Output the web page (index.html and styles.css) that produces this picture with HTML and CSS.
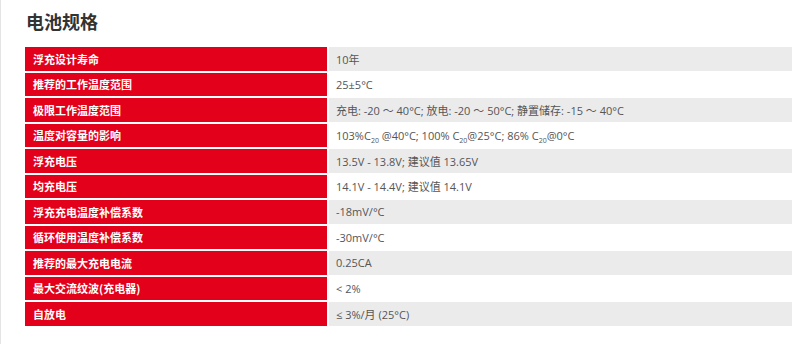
FILE: index.html
```html
<!DOCTYPE html>
<html lang="zh">
<head>
<meta charset="utf-8">
<link rel="stylesheet" href="styles.css">
</head>
<body>
<div class="page">
  <h2 class="title">电池规格</h2>
  <div class="spec">
    <div class="k">浮充设计寿命</div><div class="v odd"><span>10年</span></div>
    <div class="k">推荐的工作温度范围</div><div class="v"><span>25±5°C</span></div>
    <div class="k">极限工作温度范围</div><div class="v odd"><span>充电: -20 ～ 40°C; 放电: -20 ～ 50°C; 静置储存: -15 ～ 40°C</span></div>
    <div class="k">温度对容量的影响</div><div class="v"><span>103%C<sub>20</sub> @40°C; 100% C<sub>20</sub>@25°C; 86% C<sub>20</sub>@0°C</span></div>
    <div class="k">浮充电压</div><div class="v odd"><span>13.5V - 13.8V; 建议值 13.65V</span></div>
    <div class="k">均充电压</div><div class="v"><span>14.1V - 14.4V; 建议值 14.1V</span></div>
    <div class="k">浮充充电温度补偿系数</div><div class="v odd"><span>-18mV/°C</span></div>
    <div class="k">循环使用温度补偿系数</div><div class="v"><span>-30mV/°C</span></div>
    <div class="k">推荐的最大充电电流</div><div class="v odd"><span>0.25CA</span></div>
    <div class="k">最大交流纹波(充电器)</div><div class="v"><span>&lt; 2%</span></div>
    <div class="k">自放电</div><div class="v odd"><span>≤ 3%/月 (25°C)</span></div>
  </div>
</div>
</body>
</html>
```
FILE: styles.css
```css
html, body {
  margin: 0;
  padding: 0;
  background: #fff;
}
body {
  font-family: "Open Sans", "Noto Sans CJK SC", sans-serif;
}
.page {
  width: 800px;
  height: 344px;
  box-sizing: border-box;
  border-left: 1px solid #e4e4e4;
  padding: 9px 8px 0 24px;
}
.title {
  margin: 0 0 13px 1px;
  font-family: "Noto Sans CJK SC", sans-serif;
  font-size: 18px;
  font-weight: 700;
  line-height: 25px;
  color: #333;
}
.spec {
  display: grid;
  grid-template-columns: 302px 1fr;
  grid-auto-rows: 23.5px;
  gap: 2px;
}
.k {
  background: #e2001a;
  color: #fff;
  font-family: "Noto Sans CJK SC", sans-serif;
  font-size: 11px;
  font-weight: 700;
  padding-left: 8px;
  display: flex;
  align-items: center;
}
.v {
  background: #fff;
  color: #555;
  font-size: 11px;
  padding-left: 7px;
  display: flex;
  align-items: center;
  white-space: pre;
}
.v.odd {
  background: #ebebeb;
}
.v sub {
  font-size: 7px;
  vertical-align: -3px;
  line-height: 0;
}
```
